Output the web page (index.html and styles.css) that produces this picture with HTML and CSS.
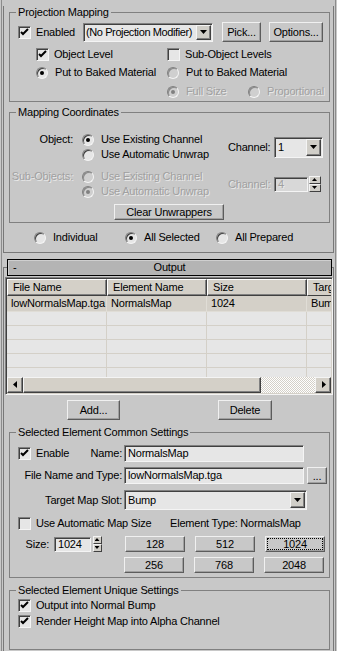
FILE: index.html
```html
<!DOCTYPE html>
<html lang="en">
<head>
    <meta charset="UTF-8">
    <meta name="viewport" content="width=device-width, initial-scale=1.0">
    <title>Render To Texture</title>
    <link rel="stylesheet" href="styles.css">
</head>
<body>

<div class="frame">

    <div class="rollout rollout-top">
        <fieldset class="group g-proj">
            <legend>Projection Mapping</legend>
            <div class="row row-enabled">
                <label class="check cell-enabled"><span class="box"><svg width="11" height="11" viewBox="0 0 11 11"><path d="M2 5l2 2 5-5" fill="none" stroke="#000" stroke-width="2"/></svg></span>Enabled</label>
                <div class="combo combo-proj"><span class="combo-text">(No Projection Modifier)</span><span class="combo-btn"></span></div>
                <button class="btn btn-pick">Pick...</button>
                <button class="btn btn-options">Options...</button>
            </div>
            <div class="row row-line row-levels">
                <label class="check cell-half"><span class="box"><svg width="11" height="11" viewBox="0 0 11 11"><path d="M2 5l2 2 5-5" fill="none" stroke="#000" stroke-width="2"/></svg></span>Object Level</label>
                <label class="check"><span class="box"></span>Sub-Object Levels</label>
            </div>
            <div class="row row-line row-baked">
                <label class="radio cell-half"><span class="dot on"></span>Put to Baked Material</label>
                <label class="radio"><span class="dot dot-dis"></span>Put to Baked Material</label>
            </div>
            <div class="row row-line row-size disabled">
                <label class="radio cell-full"><span class="dot on"></span>Full Size</label>
                <label class="radio"><span class="dot"></span>Proportional</label>
            </div>
        </fieldset>

        <fieldset class="group g-map">
            <legend>Mapping Coordinates</legend>
            <div class="coord coord-obj">
                <span class="coord-label">Object:</span>
                <div class="coord-radios">
                    <label class="radio"><span class="dot on"></span>Use Existing Channel</label>
                    <label class="radio"><span class="dot"></span>Use Automatic Unwrap</label>
                </div>
                <span class="chan-label">Channel:</span>
                <div class="combo combo-chan"><span class="combo-text">1</span><span class="combo-btn"></span></div>
            </div>
            <div class="coord coord-sub disabled">
                <span class="coord-label">Sub-Objects:</span>
                <div class="coord-radios">
                    <label class="radio"><span class="dot"></span>Use Existing Channel</label>
                    <label class="radio"><span class="dot on"></span>Use Automatic Unwrap</label>
                </div>
                <span class="chan-label">Channel:</span>
                <div class="spinner">
                    <span class="spin-field spin-chan">4</span>
                    <span class="spin-btns"><span class="spin-up"></span><span class="spin-down"></span></span>
                </div>
            </div>
            <button class="btn btn-clear">Clear Unwrappers</button>
        </fieldset>

        <div class="row row-line scope">
            <label class="radio scope-cell"><span class="dot"></span>Individual</label>
            <label class="radio scope-cell"><span class="dot on"></span>All Selected</label>
            <label class="radio"><span class="dot"></span>All Prepared</label>
        </div>
    </div>

    <div class="rollout rollout-output">
        <div class="rollout-head">
            <span class="head-toggle">-</span>
            <span class="head-title">Output</span>
            <span></span>
        </div>

        <div class="listview">
            <div class="lv-header">
                <span class="lv-col">File Name</span>
                <span class="lv-col">Element Name</span>
                <span class="lv-col">Size</span>
                <span class="lv-col lv-last">Targ</span>
            </div>
            <div class="lv-body">
                <div class="lv-row lv-first">
                    <span class="lv-cell">lowNormalsMap.tga</span>
                    <span class="lv-cell">NormalsMap</span>
                    <span class="lv-cell">1024</span>
                    <span class="lv-cell lv-last">Bum</span>
                </div>
                <div class="lv-row"><span class="lv-cell"></span><span class="lv-cell"></span><span class="lv-cell"></span><span class="lv-cell lv-last"></span></div>
                <div class="lv-row"><span class="lv-cell"></span><span class="lv-cell"></span><span class="lv-cell"></span><span class="lv-cell lv-last"></span></div>
                <div class="lv-row"><span class="lv-cell"></span><span class="lv-cell"></span><span class="lv-cell"></span><span class="lv-cell lv-last"></span></div>
                <div class="lv-row"><span class="lv-cell"></span><span class="lv-cell"></span><span class="lv-cell"></span><span class="lv-cell lv-last"></span></div>
                <div class="lv-row"><span class="lv-cell"></span><span class="lv-cell"></span><span class="lv-cell"></span><span class="lv-cell lv-last"></span></div>
            </div>
            <div class="hscroll">
                <span class="sb-btn sb-left"></span>
                <span class="sb-thumb"></span>
                <span class="sb-track"></span>
                <span class="sb-btn sb-right"></span>
            </div>
        </div>

        <div class="row list-buttons">
            <button class="btn btn-add">Add...</button>
            <button class="btn btn-delete">Delete</button>
        </div>

        <fieldset class="group g-common">
            <legend>Selected Element Common Settings</legend>
            <div class="fld fld-name">
                <label class="check cell-enable"><span class="box"><svg width="11" height="11" viewBox="0 0 11 11"><path d="M2 5l2 2 5-5" fill="none" stroke="#000" stroke-width="2"/></svg></span>Enable</label>
                <span class="fld-label lbl-name">Name:</span>
                <span class="edit">NormalsMap</span>
            </div>
            <div class="fld fld-file">
                <span class="fld-label lbl-wide">File Name and Type:</span>
                <span class="edit">lowNormalsMap.tga</span>
                <button class="btn btn-browse">...</button>
            </div>
            <div class="fld fld-slot">
                <span class="fld-label lbl-wide">Target Map Slot:</span>
                <div class="combo combo-slot"><span class="combo-text">Bump</span><span class="combo-btn"></span></div>
            </div>
            <div class="fld fld-auto">
                <label class="check cell-auto"><span class="box"></span>Use Automatic Map Size</label>
                <span>Element Type: NormalsMap</span>
            </div>
            <div class="fld fld-size">
                <span class="fld-label lbl-size">Size:</span>
                <div class="spinner">
                    <span class="spin-field spin-size">1024</span>
                    <span class="spin-btns spin-btns-size"><span class="spin-up"></span><span class="spin-down"></span></span>
                </div>
                <button class="btn btn-size btn-first">128</button>
                <button class="btn btn-size">512</button>
                <button class="btn btn-size btn-focus"><span class="focus">1024</span></button>
            </div>
            <div class="fld fld-size2">
                <button class="btn btn-size">256</button>
                <button class="btn btn-size">768</button>
                <button class="btn btn-size">2048</button>
            </div>
        </fieldset>

        <fieldset class="group g-unique">
            <legend>Selected Element Unique Settings</legend>
            <div class="fld fld-uq1">
                <label class="check"><span class="box"><svg width="11" height="11" viewBox="0 0 11 11"><path d="M2 5l2 2 5-5" fill="none" stroke="#000" stroke-width="2"/></svg></span>Output into Normal Bump</label>
            </div>
            <div class="fld fld-uq2">
                <label class="check"><span class="box"><svg width="11" height="11" viewBox="0 0 11 11"><path d="M2 5l2 2 5-5" fill="none" stroke="#000" stroke-width="2"/></svg></span>Render Height Map into Alpha Channel</label>
            </div>
        </fieldset>
    </div>

</div>

</body>
</html>
```

FILE: styles.css
```css
* {
    box-sizing: border-box;
}
body {
    margin: 0;
    width: 337px;
    height: 651px;
    overflow: hidden;
    background-color: #c8c8c8;
    font-family: "Liberation Sans", Arial, sans-serif;
    font-size: 11px;
    line-height: 13px;
    letter-spacing: -0.2px;
    color: #000;
}

/* outer scroll panel + rollouts */
.frame {
    margin: 0 1px;
    height: 651px;
    overflow: hidden;
    border-left: 1px solid #8c8c8c;
    border-right: 1px solid #8c8c8c;
}
.rollout {
    margin: 0 1px;
    border: 1px solid #787878;
}
.rollout-top {
    border-top: none;
    padding-bottom: 8px;
}
.rollout-output {
    margin-top: 14px;
    border-bottom: none;
    height: 384px;
}
.rollout-head {
    display: grid;
    grid-template-columns: 30px 1fr 30px;
    align-items: center;
    height: 17px;
    margin: -9px 1px 0 3px;
    background-color: #b4b4b4;
    border: 1px solid #000;
    box-shadow: inset 1px 1px 0 #cfcfcf;
}
.head-toggle {
    padding-left: 5px;
}
.head-title {
    text-align: center;
}

/* group boxes */
.group {
    margin: 0 3px 0 5px;
    padding: 0;
    min-width: 0;
    border: 1px solid #808080;
}
.group legend {
    margin-left: 6px;
    padding: 0 2px;
    line-height: 13px;
}
.g-proj {
    margin-top: 6px;
    padding-bottom: 3px;
}
.g-map {
    margin-top: 4px;
    padding-bottom: 2px;
}
.g-common {
    margin-top: 6px;
    padding-bottom: 4px;
}
.g-unique {
    margin-top: 6px;
    padding-bottom: 21px;
}

.row {
    display: flex;
    align-items: center;
}
.row-line {
    height: 13px;
}
.row-enabled {
    height: 20px;
    margin-top: 3px;
    padding-left: 8px;
}
.row-levels {
    margin-top: 6px;
    padding-left: 26px;
}
.row-baked {
    margin-top: 5px;
    padding-left: 26px;
}
.row-size {
    margin-top: 6px;
    padding-left: 157px;
}
.cell-enabled {
    width: 65px;
}
.cell-half {
    width: 131px;
}
.cell-full {
    width: 81px;
}

/* checkbox + radio */
.check, .radio {
    display: flex;
    align-items: center;
    white-space: nowrap;
    flex: none;
}
.box {
    flex: none;
    width: 13px;
    height: 13px;
    margin-right: 5px;
    background-color: #e6e6e6;
    border: 1px solid;
    border-color: #808080 #f4f4f4 #f4f4f4 #808080;
    box-shadow: inset 1px 1px 0 #404040;
}
.box svg {
    display: block;
}
.dot {
    position: relative;
    flex: none;
    width: 12px;
    height: 12px;
    margin-right: 7px;
    border-radius: 50%;
    background-color: #e6e6e6;
    border: 1px solid;
    border-color: #808080 #f4f4f4 #f4f4f4 #808080;
    box-shadow: inset 1px 1px 0 #404040;
}
.dot.on::after {
    content: "";
    position: absolute;
    left: 3px;
    top: 3px;
    width: 4px;
    height: 4px;
    border-radius: 50%;
    background-color: #000;
}
.dot-dis {
    background-color: #cfcfcf;
    box-shadow: inset 1px 1px 0 #8a8a8a;
}
.disabled {
    color: #a0a0a0;
    text-shadow: 1px 1px 0 #e8e8e8;
}
.disabled .dot {
    background-color: #cfcfcf;
    box-shadow: inset 1px 1px 0 #8a8a8a;
}
.disabled .dot.on::after {
    background-color: #808080;
}

/* buttons */
.btn {
    display: block;
    flex: none;
    padding: 0;
    font: inherit;
    letter-spacing: inherit;
    color: #000;
    background-color: #c8c8c8;
    border: 1px solid;
    border-color: #f0f0f0 #5c5c5c #5c5c5c #f0f0f0;
    box-shadow: inset -1px -1px 0 #a0a0a0;
}
.btn-pick {
    width: 39px;
    height: 20px;
    margin-left: 9px;
}
.btn-options {
    width: 54px;
    height: 20px;
    margin-left: 8px;
}
.btn-clear {
    width: 110px;
    height: 16px;
    margin: 5px 0 0 104px;
}

/* combo boxes, edits, spinners */
.combo {
    display: flex;
    align-items: stretch;
    flex: none;
    padding: 1px;
    background-color: #e6e6e6;
    border: 1px solid;
    border-color: #808080 #f4f4f4 #f4f4f4 #808080;
    box-shadow: inset 1px 1px 0 #404040;
}
.combo-text {
    flex: 1;
    padding: 1px 0 0 2px;
    overflow: hidden;
    white-space: nowrap;
    align-self: center;
}
.combo-btn {
    position: relative;
    flex: none;
    width: 15px;
    background-color: #d0cec8;
    border: 1px solid;
    border-color: #f4f4f4 #404040 #404040 #f4f4f4;
    box-shadow: inset -1px -1px 0 #808080;
}
.combo-btn::after {
    content: "";
    position: absolute;
    left: 3px;
    top: 50%;
    margin-top: -2px;
    width: 7px;
    height: 4px;
    background-color: #000;
    clip-path: polygon(0 0, 100% 0, 50% 100%);
}
.combo-proj {
    width: 130px;
    height: 19px;
}
.combo-proj .combo-text {
    padding-left: 1px;
    letter-spacing: -0.4px;
}
.combo-chan {
    width: 49px;
    height: 21px;
}
.combo-slot {
    width: 183px;
    height: 20px;
}
.edit {
    flex: none;
    width: 180px;
    height: 17px;
    padding: 1px 0 0 3px;
    line-height: 13px;
    white-space: nowrap;
    background-color: #e6e6e6;
    border: 1px solid;
    border-color: #808080 #f4f4f4 #f4f4f4 #808080;
    box-shadow: inset 1px 1px 0 #404040;
}
.spinner {
    display: flex;
    align-items: center;
    flex: none;
}
.spin-field {
    height: 15px;
    padding: 1px 0 0 3px;
    line-height: 11px;
    background-color: #e6e6e6;
    border: 1px solid;
    border-color: #808080 #f4f4f4 #f4f4f4 #808080;
    box-shadow: inset 1px 1px 0 #404040;
}
.spin-chan {
    width: 34px;
    background-color: #d8d8d8;
}
.spin-size {
    width: 37px;
}
.spin-btns {
    display: flex;
    flex-direction: column;
    width: 12px;
    height: 16px;
    margin-left: 1px;
}
.spin-btns-size {
    width: 9px;
    margin-left: 2px;
}
.spin-up, .spin-down {
    position: relative;
    flex: 1;
    background-color: #d0cec8;
    border: 1px solid;
    border-color: #f4f4f4 #404040 #404040 #f4f4f4;
}
.spin-up::after, .spin-down::after {
    content: "";
    position: absolute;
    left: 50%;
    top: 1px;
    margin-left: -3px;
    width: 5px;
    height: 3px;
    background-color: #000;
    clip-path: polygon(50% 0, 100% 100%, 0 100%);
}
.spin-down::after {
    clip-path: polygon(0 0, 100% 0, 50% 100%);
}

/* mapping coordinates */
.coord {
    display: flex;
    align-items: center;
}
.coord-obj {
    margin-top: 13px;
}
.coord-sub {
    margin-top: 7px;
}
.coord-label {
    align-self: flex-start;
    width: 72px;
    padding-right: 9px;
    text-align: right;
    line-height: 15px;
}
.coord-radios {
    width: 146px;
}
.coord-radios .radio {
    height: 15px;
}
.chan-label {
    width: 46px;
}
.scope {
    margin-top: 8px;
    padding-left: 30px;
}
.scope-cell {
    width: 91px;
}

/* list view */
.listview {
    margin: 1px 0 0 1px;
    height: 118px;
    padding: 1px;
    overflow: hidden;
    background-color: #e6e6e6;
    border: 1px solid;
    border-color: #808080 #f4f4f4 #f4f4f4 #808080;
    box-shadow: inset 1px 1px 0 #404040, inset -1px -1px 0 #d4d0c8;
}
.lv-header {
    display: flex;
    height: 17px;
}
.lv-col {
    flex: none;
    width: 100px;
    padding-left: 5px;
    line-height: 14px;
    white-space: nowrap;
    overflow: hidden;
    background-color: #d4d0c8;
    border: 1px solid;
    border-color: #fff #404040 #404040 #fff;
    box-shadow: inset -1px -1px 0 #808080;
}
.lv-body {
    height: 81px;
    overflow: hidden;
}
.lv-row {
    display: flex;
    height: 14px;
    border-bottom: 1px solid #d4d0c8;
}
.lv-first {
    height: 16px;
    background-color: #d4d0c8;
    border-bottom-color: #e0ddd6;
}
.lv-cell {
    flex: none;
    width: 100px;
    padding-left: 4px;
    line-height: 14px;
    white-space: nowrap;
    overflow: hidden;
    border-right: 1px solid #d4d0c8;
}
.lv-first .lv-cell {
    border-right-color: #e0ddd6;
}
.lv-header .lv-last, .lv-row .lv-last {
    width: 24px;
    border-right: none;
}
.lv-header .lv-last {
    box-shadow: none;
}
.hscroll {
    display: flex;
    height: 16px;
}
.sb-btn, .sb-thumb {
    position: relative;
    flex: none;
    background-color: #d4d0c8;
    border: 1px solid;
    border-color: #f4f4f4 #404040 #404040 #f4f4f4;
    box-shadow: inset -1px -1px 0 #808080;
}
.sb-btn {
    width: 16px;
}
.sb-thumb {
    width: 238px;
}
.sb-track {
    flex: 1;
    background: repeating-conic-gradient(#ffffff 0 25%, #d4d0c8 0 50%) 0 0 / 2px 2px;
}
.sb-btn::after {
    content: "";
    position: absolute;
    left: 5px;
    top: 3px;
    width: 4px;
    height: 7px;
    background-color: #000;
    clip-path: polygon(100% 0, 100% 100%, 0 50%);
}
.sb-right::after {
    left: 6px;
    clip-path: polygon(0 0, 0 100%, 100% 50%);
}
.list-buttons {
    margin-top: 5px;
    padding-left: 63px;
}
.btn-add {
    width: 53px;
    height: 20px;
}
.btn-delete {
    width: 54px;
    height: 20px;
    margin-left: 98px;
}

/* element settings */
.fld {
    display: flex;
    align-items: center;
    padding-left: 8px;
}
.fld-label {
    flex: none;
    padding-right: 2px;
    text-align: right;
    white-space: nowrap;
}
.fld-name {
    height: 17px;
    margin-top: 6px;
}
.cell-enable {
    width: 72px;
}
.lbl-name {
    width: 34px;
}
.lbl-wide {
    width: 114px;
}
.fld-file {
    height: 17px;
    margin-top: 5px;
    padding-left: 0;
}
.btn-browse {
    width: 20px;
    height: 17px;
    margin-left: 3px;
    line-height: 10px;
}
.fld-slot {
    height: 20px;
    margin-top: 6px;
    padding-left: 0;
}
.fld-auto {
    height: 13px;
    margin-top: 7px;
}
.cell-auto {
    width: 152px;
}
.fld-size {
    height: 16px;
    margin-top: 6px;
    padding-left: 0;
}
.lbl-size {
    width: 44px;
    padding-right: 5px;
}
.btn-size {
    width: 60px;
    height: 16px;
    margin-left: 10px;
}
.btn-first {
    margin-left: 23px;
}
.fld-size2 {
    height: 16px;
    margin-top: 5px;
    padding-left: 104px;
}
.btn-focus {
    padding: 1px;
}
.btn-focus .focus {
    display: block;
    height: 12px;
    line-height: 10px;
    border: 1px dotted #000;
}
.fld-uq1 {
    height: 13px;
    margin-top: 2px;
}
.fld-uq2 {
    height: 13px;
    margin-top: 3px;
}
```
